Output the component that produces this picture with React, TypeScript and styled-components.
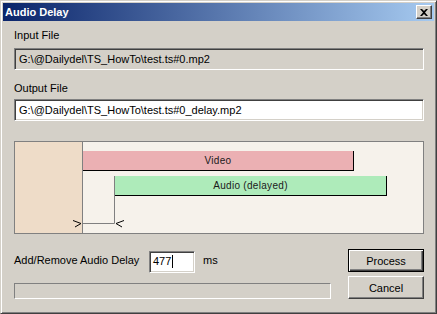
import React from "react"
import styled, { createGlobalStyle } from "styled-components"

const GlobalStyle = createGlobalStyle`
  html, body {
    margin: 0;
    padding: 0;
    background: #d4d0c8;
  }
  body {
    font-family: "Liberation Sans", Arial, sans-serif;
    font-size: 11px;
    color: #000;
  }
`

const Window = styled.div`
  box-sizing: border-box;
  width: 437px;
  height: 314px;
  background: #d4d0c8;
  border: 1px solid;
  border-color: #d4d0c8 #404040 #404040 #d4d0c8;
  box-shadow: inset 1px 1px #fff, inset -1px -1px #808080;
  padding: 2px;
  display: flex;
  flex-direction: column;
`

const TitleBar = styled.div`
  height: 18px;
  display: flex;
  align-items: center;
  justify-content: space-between;
  padding: 0 2px;
  background: linear-gradient(to right, #0a246a, #a6caf0);
`

const Title = styled.span`
  color: #fff;
  font-weight: bold;
  font-size: 11px;
  line-height: 18px;
`

const CloseButton = styled.div`
  box-sizing: border-box;
  width: 16px;
  height: 14px;
  background: #d4d0c8;
  border: 1px solid;
  border-color: #fff #404040 #404040 #fff;
  box-shadow: inset -1px -1px #808080;
  display: flex;
  align-items: center;
  justify-content: center;
`

const Content = styled.div`
  padding: 8px 10px 0 11px;
  display: flex;
  flex-direction: column;
`

const FieldLabel = styled.div<{ $gap: number }>`
  line-height: 13px;
  margin-bottom: ${(p) => p.$gap}px;
`

const Field = styled.div<{ $readOnly?: boolean }>`
  box-sizing: border-box;
  height: 22px;
  border: 1px solid;
  border-color: #808080 #fff #fff #808080;
  box-shadow: inset 1px 1px #404040, inset -1px -1px #d4d0c8;
  background: ${(p) => (p.$readOnly ? "#d4d0c8" : "#fff")};
  padding: 0 4px;
  display: flex;
  align-items: center;
  line-height: 13px;
  white-space: nowrap;
`

const Canvas = styled.div`
  position: relative;
  box-sizing: border-box;
  margin-top: 20px;
  height: 93px;
  border: 1px solid #808080;
  background: #f6f2eb;
  display: flex;
  overflow: hidden;
`

const Lane = styled.div`
  width: 67px;
  background: #eedcc8;
  border-right: 1px solid #808080;
`

const Bar = styled.div<{ $color: string }>`
  position: absolute;
  box-sizing: border-box;
  height: 20px;
  background: ${(p) => p.$color};
  border-right: 1px solid #000;
  border-bottom: 1px solid #000;
  display: flex;
  align-items: center;
  justify-content: center;
  font-size: 10px;
  letter-spacing: 0.3px;
  color: #1a1a1a;
`

const Overlay = styled.svg`
  position: absolute;
  left: 0;
  top: 0;
`

const Bottom = styled.div`
  margin-top: 15px;
  display: grid;
  grid-template-columns: 317px 1fr 76px;
`

const LeftCol = styled.div`
  display: flex;
  flex-direction: column;
`

const DelayRow = styled.div`
  display: flex;
  align-items: center;
  height: 23px;
`

const DelayLabel = styled.span`
  width: 135px;
  line-height: 13px;
`

const DelayInput = styled(Field)`
  width: 46px;
  margin-top: 2px;
  padding: 0 3px;
`

const Caret = styled.span`
  display: inline-block;
  width: 1px;
  height: 13px;
  background: #000;
  margin-left: 1px;
`

const Unit = styled.span`
  margin-left: 8px;
  line-height: 13px;
`

const Progress = styled.div`
  box-sizing: border-box;
  margin-top: 11px;
  height: 16px;
  border: 1px solid;
  border-color: #808080 #fff #fff #808080;
`

const ButtonCol = styled.div`
  grid-column: 3;
  display: flex;
  flex-direction: column;
  gap: 4px;
`

const Button = styled.div<{ $default?: boolean }>`
  box-sizing: border-box;
  height: 23px;
  display: flex;
  align-items: center;
  justify-content: center;
  font-size: 11px;
  background: #d4d0c8;
  border: 1px solid;
  border-color: ${(p) => (p.$default ? "#000" : "#fff #404040 #404040 #fff")};
  box-shadow: ${(p) =>
    p.$default
      ? "inset 1px 1px #fff, inset -1px -1px #404040, inset -2px -2px #808080"
      : "inset -1px -1px #808080"};
`

const delayPx = 32
const laneEdge = 68

const App: React.FC = () => {
  const audioLeft = laneEdge + delayPx
  return (
    <>
      <GlobalStyle />
      <Window>
        <TitleBar>
          <Title>Audio Delay</Title>
          <CloseButton>
            <svg width="8" height="7" viewBox="0 0 8 7">
              <path d="M0 0h2l2 2 2-2h2L5 3.5 8 7H6L4 5 2 7H0l3-3.5z" fill="#000" />
            </svg>
          </CloseButton>
        </TitleBar>
        <Content>
          <FieldLabel $gap={6}>Input File</FieldLabel>
          <Field $readOnly>G:\@Dailydel\TS_HowTo\test.ts#0.mp2</Field>
          <FieldLabel $gap={4} style={{ marginTop: 12 }}>
            Output File
          </FieldLabel>
          <Field>G:\@Dailydel\TS_HowTo\test.ts#0_delay.mp2</Field>
          <Canvas>
            <Lane />
            <Bar $color="#ebb0b3" style={{ left: laneEdge, top: 9, width: 271 }}>
              Video
            </Bar>
            <Bar $color="#aeebba" style={{ left: audioLeft, top: 34, width: 272 }}>
              Audio (delayed)
            </Bar>
            <Overlay width="408" height="91">
              <g stroke="#808080" strokeWidth="1" fill="none">
                <path d={`M${audioLeft - 0.5} 34V81.5H${laneEdge}`} />
              </g>
              <g stroke="#000" strokeWidth="1" fill="none">
                <path d={`M${laneEdge - 10} 78.5l8 3-6 3.5`} />
                <path d={`M${audioLeft + 9} 78.5l-8 3 6 3.5`} />
              </g>
            </Overlay>
          </Canvas>
          <Bottom>
            <LeftCol>
              <DelayRow>
                <DelayLabel>Add/Remove Audio Delay</DelayLabel>
                <DelayInput>
                  477
                  <Caret />
                </DelayInput>
                <Unit>ms</Unit>
              </DelayRow>
              <Progress />
            </LeftCol>
            <ButtonCol>
              <Button $default>Process</Button>
              <Button>Cancel</Button>
            </ButtonCol>
          </Bottom>
        </Content>
      </Window>
    </>
  )
}

export default App
